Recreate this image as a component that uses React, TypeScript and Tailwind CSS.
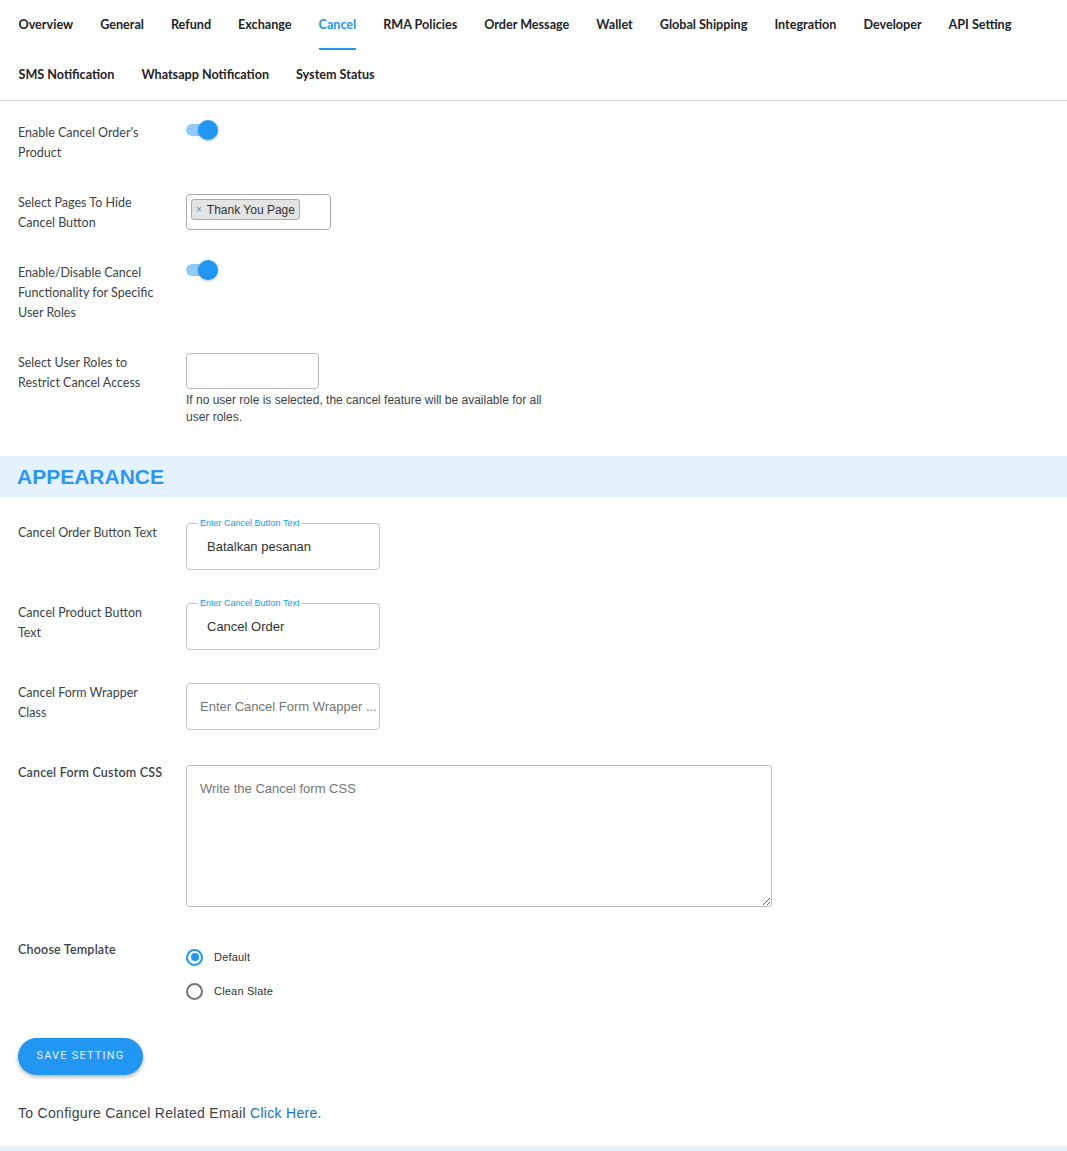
import React, { useState } from 'react';

const tabs = [
  'Overview', 'General', 'Refund', 'Exchange', 'Cancel', 'RMA Policies', 'Order Message', 'Wallet',
  'Global Shipping', 'Integration', 'Developer', 'API Setting', 'SMS Notification', 'Whatsapp Notification', 'System Status',
];

const labelCls = "w-[186px] shrink-0 pl-[18px] pr-[22px] text-[12.5px] leading-[20px] text-[#3c434a] font-['Lato',sans-serif]";

const Toggle = () => (
  <div className="relative mt-[-3px] h-[20px] w-[34px]">
    <div className="absolute left-0 top-[4px] h-[12px] w-[30px] rounded-full bg-[#90caf9]" />
    <div className="absolute left-[12px] top-0 h-[20px] w-[20px] rounded-full bg-[#2196f3] shadow-[0_1px_3px_rgba(0,0,0,0.3)]" />
  </div>
);

const OutlinedField = ({ label, value }: { label: string; value: string }) => (
  <div className="relative flex h-[47px] w-[194px] items-center rounded-[4px] border border-[#c4c4c4] pl-[20px] text-[13px] text-[#333] font-['Liberation_Sans',Arial,sans-serif]">
    <span className="absolute -top-[7px] left-[10px] bg-white px-[3px] text-[9px] leading-[12px] text-[#2196f3]">{label}</span>
    {value}
  </div>
);

export default function App() {
  const [template, setTemplate] = useState('default');

  return (
    <div className="min-h-[1151px] bg-white">
      {/* Tabs */}
      <nav className="flex flex-wrap border-b border-[#dcdcde] pl-[5px] font-['Lato',sans-serif]">
        {tabs.map((t) => (
          <div
            key={t}
            className={
              'relative flex h-[50px] items-center px-[13.5px] text-[12.6px] font-bold ' +
              (t === 'Cancel' ? 'text-[#2196f3]' : 'text-[#1d2327]')
            }
          >
            {t}
            {t === 'Cancel' && <span className="absolute bottom-[0px] left-[13.5px] right-[13.5px] h-[2px] bg-[#2196f3]" />}
          </div>
        ))}
      </nav>

      {/* General options */}
      <div className="flex flex-col gap-[30px] pt-[22px]">
        <div className="flex">
          <div className={labelCls}>Enable Cancel Order's Product</div>
          <Toggle />
        </div>

        <div className="flex">
          <div className={labelCls}>Select Pages To Hide Cancel Button</div>
          <div className="mt-[1px] flex h-[36px] w-[145px] items-start rounded-[4px] border border-[#aaa] p-[4px] font-['Liberation_Sans',Arial,sans-serif]">
            <span className="flex h-[21px] items-center rounded-[3px] border border-[#aaa] bg-[#e4e4e4] px-[4px] text-[12px] text-[#333]">
              <span className="mr-[5px] text-[10px] text-[#888]">×</span>Thank You Page
            </span>
          </div>
        </div>

        <div className="flex">
          <div className={labelCls}>Enable/Disable Cancel Functionality for Specific User Roles</div>
          <Toggle />
        </div>

        <div className="flex">
          <div className={labelCls}>Select User Roles to Restrict Cancel Access</div>
          <div>
            <div className="h-[36px] w-[133px] rounded-[4px] border border-[#bbb]" />
            <p className="mt-[3px] w-[360px] text-[12px] leading-[17px] text-[#3c434a] font-['Liberation_Sans',Arial,sans-serif]">
              If no user role is selected, the cancel feature will be available for all user roles.
            </p>
          </div>
        </div>
      </div>

      {/* Appearance */}
      <div className="mt-[30px] flex h-[41px] items-center bg-[#e3f2fd] pl-[17px]">
        <h2 className="text-[21px] font-bold text-[#2d96f0] font-['Liberation_Sans',Arial,sans-serif]">APPEARANCE</h2>
      </div>

      <div className="flex flex-col gap-[33px] pt-[26px]">
        <div className="flex">
          <div className={labelCls}>Cancel Order Button Text</div>
          <OutlinedField label="Enter Cancel Button Text" value="Batalkan pesanan" />
        </div>

        <div className="flex">
          <div className={labelCls}>Cancel Product Button Text</div>
          <OutlinedField label="Enter Cancel Button Text" value="Cancel Order" />
        </div>

        <div className="flex">
          <div className={labelCls}>Cancel Form Wrapper Class</div>
          <input
            placeholder="Enter Cancel Form Wrapper ..."
            className="h-[47px] w-[194px] rounded-[4px] border border-[#c4c4c4] pl-[13px] text-[13px] text-[#333] placeholder:text-[#757575] outline-none font-['Liberation_Sans',Arial,sans-serif]"
          />
        </div>

        <div className="flex">
          <div className={labelCls + ' font-semibold tracking-[0.2px]'}>Cancel Form Custom CSS</div>
          <textarea
            placeholder="Write the Cancel form CSS"
            className="mt-[2px] h-[142px] w-[586px] rounded-[3px] border border-[#bdbdbd] px-[13px] py-[13px] text-[13px] text-[#333] placeholder:text-[#757575] outline-none font-['Liberation_Sans',Arial,sans-serif]"
          />
        </div>

        <div className="flex">
          <div className={labelCls + ' font-semibold tracking-[0.2px]'}>Choose Template</div>
          <div className="flex flex-col font-['Liberation_Sans',Arial,sans-serif]">
            {[
              { id: 'default', label: 'Default' },
              { id: 'clean', label: 'Clean Slate' },
            ].map((o) => (
              <label key={o.id} className="flex h-[34px] cursor-pointer items-center" onClick={() => setTemplate(o.id)}>
                <span
                  className={
                    'flex h-[17px] w-[17px] items-center justify-center rounded-full border-2 ' +
                    (template === o.id ? 'border-[#2196f3]' : 'border-[#757575]')
                  }
                >
                  {template === o.id && <span className="h-[8px] w-[8px] rounded-full bg-[#2196f3]" />}
                </span>
                <span className="ml-[11px] text-[11px] font-medium tracking-[0.2px] text-[#333]">{o.label}</span>
              </label>
            ))}
          </div>
        </div>
      </div>

      <div className="pl-[18px] pt-[30px]">
        <button className="h-[37px] w-[125px] rounded-full bg-[#2196f3] text-[11px] tracking-[1.2px] text-[#e3f2fd] shadow-[0_2px_4px_rgba(0,0,0,0.3)] font-['Roboto',sans-serif]">
          SAVE SETTING
        </button>
        <p className="mt-[29px] text-[14px] leading-[18px] tracking-[0.3px] text-[#3c434a] font-['Liberation_Sans',Arial,sans-serif]">
          To Configure Cancel Related Email <a className="text-[#2271b1]">Click Here.</a>
        </p>
      </div>

      <div className="mt-[24px] h-[10px] bg-[#e3f2fd]" />
    </div>
  );
}
